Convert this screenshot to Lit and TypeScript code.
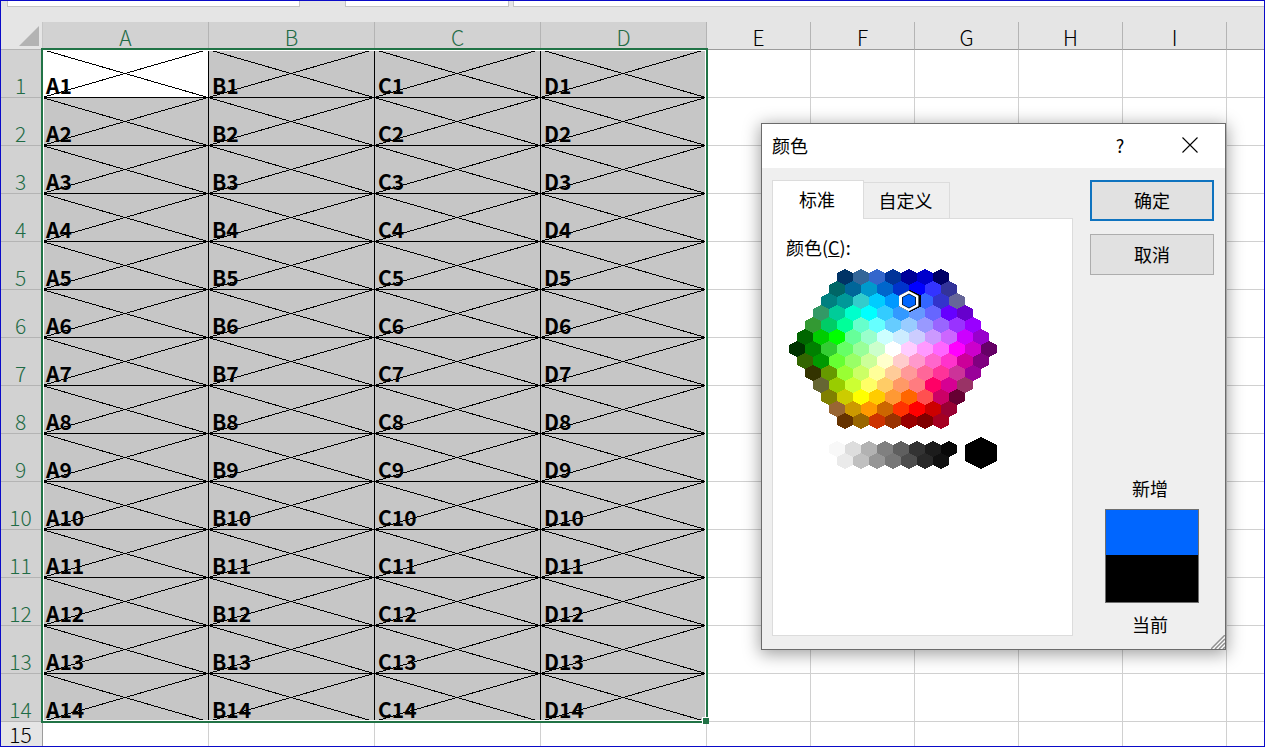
import { LitElement, html, svg, css } from "lit";
import { customElement, property, state } from "lit/decorators.js";
import { classMap } from "lit/directives/class-map.js";

const HEX_ROWS: string[] = [
  "003366 336699 3366CC 003399 000099 0000CC 000066",
  "006666 006699 0099CC 0066CC 0033CC 0000FF 3333FF 333399",
  "008080 009999 33CCCC 00CCFF 0099FF 0066FF 3366FF 3333CC 666699",
  "339966 00CC99 00FFCC 00FFFF 33CCFF 3399FF 6699FF 6666FF 6600FF 6600CC",
  "339933 00CC66 00FF99 66FFCC 66FFFF 66CCFF 99CCFF 9999FF 9966FF 9933FF 9900FF",
  "006600 00CC00 00FF00 66FF99 99FFCC CCFFFF CCECFF CCCCFF CC99FF CC66FF CC00FF 9900CC",
  "003300 008000 33CC33 66FF66 99FF99 CCFFCC FFFFFF FFCCFF FF99FF FF66FF FF00FF CC00CC 660066",
  "336600 009900 66FF33 99FF66 CCFF99 FFFFCC FFCCCC FF99CC FF66CC FF33CC CC0099 800080",
  "333300 669900 99FF33 CCFF66 FFFF99 FFCC99 FF9999 FF6699 FF3399 CC3399 990099",
  "666633 99CC00 CCFF33 FFFF66 FFCC66 FF9966 FF7C80 FF0066 D60093 993366",
  "808000 CCCC00 FFFF00 FFCC00 FF9933 FF6600 FF5050 CC0066 660033",
  "996633 CC9900 FF9900 CC6600 FF3300 FF0000 CC0000 990033",
  "663300 996600 CC3300 993300 990000 800000 A50021",
];

const GREY_ROWS: string[] = [
  "F8F8F8 DDDDDD B2B2B2 808080 5F5F5F 333333 1C1C1C 080808",
  "EAEAEA C0C0C0 969696 777777 4D4D4D 292929 111111",
];

interface Cell {
  x: number;
  y: number;
  color: string;
}

function layoutRows(rows: string[], centre: number, top: number): Cell[] {
  return rows.flatMap((row, r) => {
    const colors = row.split(" ");
    const start = centre - (colors.length - 1) * 8;
    return colors.map((c, i) => ({ x: start + i * 16, y: top + r * 12, color: "#" + c }));
  });
}

const CELLS: Cell[] = [...layoutRows(HEX_ROWS, 104, 8), ...layoutRows(GREY_ROWS, 104, 180)];

function hexPoints(x: number, y: number, w: number, h: number): string {
  const q = h / 2;
  return [
    [x, y - h],
    [x + w, y - q],
    [x + w, y + q],
    [x, y + h],
    [x - w, y + q],
    [x - w, y - q],
  ]
    .map((p) => p.join(","))
    .join(" ");
}

@customElement("color-honeycomb")
export class ColorHoneycomb extends LitElement {
  @property() value = "#0066FF";

  static styles = css`
    :host {
      display: block;
    }
    .comb {
      display: block;
      width: 209px;
      height: 202px;
      overflow: visible;
    }
    .tile {
      shape-rendering: crispEdges;
    }
  `;

  private pick(color: string) {
    this.dispatchEvent(new CustomEvent("pick", { detail: color }));
  }

  private marker(cell: Cell) {
    return svg`
      <polygon class="tile" points=${hexPoints(cell.x + 1, cell.y, 11, 11)} fill="#000"></polygon>
      <polygon points=${hexPoints(cell.x - 0.3, cell.y, 9.7, 10.3)} fill="#fff"></polygon>
      <polygon points=${hexPoints(cell.x, cell.y, 7, 7.6)} fill="#000"></polygon>
      <polygon points=${hexPoints(cell.x, cell.y, 6.3, 6.8)} fill=${cell.color}></polygon>`;
  }

  render() {
    const chosen = CELLS.find((c) => c.color === this.value);
    return html`<svg class="comb" viewBox="0 0 209 202" role="img">
      ${CELLS.map(
        (c) => svg`<polygon class="tile" points=${hexPoints(c.x, c.y, 8, 8)} fill=${c.color}
          @click=${() => this.pick(c.color)}></polygon>`
      )}
      <polygon class="tile" points=${hexPoints(192, 184, 16, 16)} fill="#000"></polygon>
      ${chosen ? this.marker(chosen) : null}
    </svg>`;
  }
}

@customElement("color-dialog")
export class ColorDialog extends LitElement {
  @state() private picked = "#0066FF";

  static styles = css`
    :host {
      display: flex;
      flex-direction: column;
      box-sizing: border-box;
      border: 1px solid #6b6b6b;
      background: #efefef;
      box-shadow: 0 3px 16px 1px rgba(0, 0, 0, 0.38);
      font: 18px/24px "Noto Sans CJK SC", "Noto Sans", sans-serif;
      color: #000;
    }
    button {
      font: inherit;
      color: inherit;
      margin: 0;
      padding: 0 0 2px;
      box-sizing: border-box;
    }
    .title {
      display: flex;
      align-items: center;
      height: 44px;
      padding: 0 11px 0 10px;
      background: #fff;
    }
    .name {
      flex: 1;
      font: inherit;
      margin: 0;
      padding-bottom: 2px;
    }
    .tool {
      display: flex;
      align-items: center;
      justify-content: center;
      width: 48px;
      height: 44px;
      border: 0;
      background: none;
    }
    .tools {
      display: flex;
      gap: 22px;
    }
    .glyph {
      width: 16px;
      height: 16px;
      stroke: #000;
      fill: none;
    }
    .body {
      flex: 1;
      display: grid;
      grid-template-columns: 1fr 124px;
      gap: 17px;
      padding: 12px 11px 13px 10px;
    }
    .left,
    .right {
      display: flex;
      flex-direction: column;
    }
    .tabs {
      display: flex;
      align-items: flex-end;
      height: 39px;
      margin-bottom: -1px;
      z-index: 1;
    }
    .tab {
      width: 86px;
      height: 37px;
      padding-right: 2px;
      border: 1px solid #dcdcdc;
      border-left: 0;
      background: #efefef;
    }
    .tab.active {
      width: 92px;
      height: 39px;
      border-left: 1px solid #dcdcdc;
      border-bottom: 0;
      background: #fff;
    }
    .panel {
      flex: 1;
      padding: 16px 13px;
      border: 1px solid #dcdcdc;
      background: #fff;
    }
    .comb {
      margin: 10px 3px 0;
    }
    .actions {
      display: flex;
      flex-direction: column;
      gap: 13px;
    }
    .action {
      height: 41px;
      border: 1px solid #adadad;
      background: #e1e1e1;
    }
    .action.primary {
      border: 2px solid #0f73bf;
    }
    .preview {
      display: flex;
      flex-direction: column;
      align-items: center;
      gap: 9px;
      margin: auto 0 0;
      padding-right: 4px;
    }
    .swatch {
      width: 92px;
      height: 92px;
      display: flex;
      flex-direction: column;
      margin-left: 4px;
      border: 1px solid #6e6e6e;
    }
    .fresh {
      height: 45px;
    }
    .current {
      flex: 1;
      background: #000;
    }
    .grip {
      position: absolute;
      right: 0;
      bottom: 0;
      width: 14px;
      height: 14px;
      fill: none;
      stroke: #8f8f8f;
    }
    .grip .light {
      stroke: #fff;
    }
  `;

  render() {
    return html`
      <header class="title">
        <h2 class="name">颜色</h2>
        <div class="tools">
          <button class="tool" type="button">?</button>
          <button class="tool" type="button" aria-label="×">
            <svg class="glyph" viewBox="0 0 16 16"><path d="M.5.5l15 15M15.5.5l-15 15" stroke-width="1.1"></path></svg>
          </button>
        </div>
      </header>
      <div class="body">
        <div class="left">
          <div class="tabs" role="tablist">
            <button class="tab active" type="button" role="tab" aria-selected="true">标准</button>
            <button class="tab" type="button" role="tab" aria-selected="false">自定义</button>
          </div>
          <div class="panel" role="tabpanel">
            <div>颜色(<u>C</u>):</div>
            <color-honeycomb
              class="comb"
              .value=${this.picked}
              @pick=${(e: CustomEvent) => (this.picked = e.detail)}
            ></color-honeycomb>
          </div>
        </div>
        <div class="right">
          <div class="actions">
            <button class="action primary" type="button">确定</button>
            <button class="action" type="button">取消</button>
          </div>
          <div class="preview">
            <span>新增</span>
            <div class="swatch">
              <div class="fresh" style="background:${this.picked}"></div>
              <div class="current"></div>
            </div>
            <span>当前</span>
          </div>
        </div>
      </div>
      <svg class="grip" viewBox="0 0 14 14">
        <path class="light" d="M1.5 14L14 1.5M5.5 14L14 5.5M9.5 14L14 9.5" stroke-width="1.2"></path>
        <path d="M0 14L14 0M4 14L14 4M8 14L14 8M12 14L14 12" stroke-width="1.5"></path>
      </svg>
    `;
  }
}

const COLUMNS = ["A", "B", "C", "D", "E", "F", "G", "H", "I", ""];
const MARKED_COLUMNS = 4;
const MARKED_ROWS = 14;

@customElement("app-root")
export class AppRoot extends LitElement {
  static styles = css`
    :host {
      --mark-w: 166px;
      --mark-h: 48px;
      display: block;
      position: relative;
      box-sizing: border-box;
      height: 100vh;
      overflow: hidden;
      border: 1px solid #0a0ac8;
      background: #fff;
      font: 21px/24px "Noto Sans CJK SC", "Noto Sans", sans-serif;
      color: #000;
    }
    .bar {
      display: flex;
      height: 21px;
      padding-left: 6px;
      background: #e5e5e5;
      align-items: flex-start;
    }
    .field {
      box-sizing: border-box;
      height: 6px;
      border: 1px solid #c4c4c4;
      border-top: 0;
      background: #fff;
    }
    .field.box {
      width: 293px;
      margin-right: 45px;
    }
    .field.tools {
      width: 164px;
      margin-right: 4px;
    }
    .field.formula {
      flex: 1;
      border-right: 0;
    }
    .sheet {
      position: relative;
    }
    .grid {
      width: 100%;
      table-layout: fixed;
      border-collapse: separate;
      border-spacing: 0;
    }
    .c-head {
      width: 42px;
    }
    .c-wide {
      width: var(--mark-w);
    }
    .c-std {
      width: 104px;
    }
    th,
    td {
      box-sizing: border-box;
      padding: 0;
      vertical-align: bottom;
      border-right: 1px solid #d0d0d0;
      border-bottom: 1px solid #d0d0d0;
    }
    th {
      font-weight: 300;
      background: #e5e5e5;
    }
    thead th {
      height: 28px;
      border-bottom-color: #9b9b9b;
      border-right-color: #b4b4b4;
    }
    tbody th {
      padding-right: 2px;
      border-right-color: #9b9b9b;
      border-bottom-color: #b4b4b4;
    }
    th:last-child,
    td:last-child {
      border-right: 0;
    }
    th.marked {
      background: #d2d2d2;
      color: #1f6b45;
    }
    thead .corner {
      border-right-color: #c6c6c6;
      border-bottom-color: #b4b4b4;
    }
    .triangle {
      display: block;
      width: 20px;
      height: 20px;
      margin: 0 3px 3px auto;
      fill: #b3b3b3;
    }
    .tall {
      height: var(--mark-h);
    }
    .short th,
    .short td {
      height: 24px;
      border-bottom: 0;
    }
    td.marked {
      position: relative;
      padding-left: 3px;
      border-color: #000;
      background: #c6c6c6;
      font-weight: 700;
    }
    td.first {
      background: #fff;
    }
    .cross {
      position: absolute;
      left: -1px;
      top: -1px;
      width: 166px;
      height: 48px;
      overflow: visible;
      stroke: #000;
      shape-rendering: crispEdges;
      pointer-events: none;
    }
    .selection {
      position: absolute;
      left: 40px;
      top: 26px;
      width: calc(var(--mark-w) * 4 + 3px);
      height: calc(var(--mark-h) * 14 + 3px);
      box-sizing: border-box;
      border: 2px solid #217346;
      box-shadow: inset 0 0 0 1px #fff;
      pointer-events: none;
    }
    .handle {
      position: absolute;
      right: -3px;
      bottom: -3px;
      width: 6px;
      height: 6px;
      background: #217346;
      border: 1px solid #fff;
      border-right: 0;
      border-bottom: 0;
    }
    .dialog {
      position: absolute;
      top: 122px;
      right: 38px;
      width: 465px;
      height: 527px;
    }
  `;

  private cell(name: string, row: number, col: number) {
    if (row > MARKED_ROWS || col >= MARKED_COLUMNS) return html`<td></td>`;
    const first = row === 1 && col === 0;
    return html`<td class=${classMap({ marked: true, first })}>
      ${name}${row}
      <svg class="cross" viewBox="0 0 166 48"><path d="M0 .5L166 48.5M166 .5L0 48.5M2 48h4M160 48h4" stroke-width="1"></path></svg>
    </td>`;
  }

  render() {
    const rows = Array.from({ length: MARKED_ROWS + 1 }, (_, i) => i + 1);
    return html`
      <div class="bar">
        <div class="field box"></div>
        <div class="field tools"></div>
        <div class="field formula"></div>
      </div>
      <div class="sheet">
        <table class="grid">
          <colgroup>
            <col class="c-head" />
            ${COLUMNS.map((name, i) =>
              name ? html`<col class=${i < MARKED_COLUMNS ? "c-wide" : "c-std"} />` : html`<col />`
            )}
          </colgroup>
          <thead>
            <tr>
              <th class="corner">
                <svg class="triangle" viewBox="0 0 20 20"><path d="M20 0V20H0z"></path></svg>
              </th>
              ${COLUMNS.map(
                (name, i) => html`<th scope="col" class=${classMap({ marked: i < MARKED_COLUMNS })}>${name}</th>`
              )}
            </tr>
          </thead>
          <tbody>
            ${rows.map(
              (r) => html`<tr class=${r > MARKED_ROWS ? "short" : "tall"}>
                <th scope="row" class=${classMap({ marked: r <= MARKED_ROWS })}>${r}</th>
                ${COLUMNS.map((name, c) => this.cell(name, r, c))}
              </tr>`
            )}
          </tbody>
        </table>
        <div class="selection"><span class="handle"></span></div>
      </div>
      <color-dialog class="dialog" role="dialog"></color-dialog>
    `;
  }
}
